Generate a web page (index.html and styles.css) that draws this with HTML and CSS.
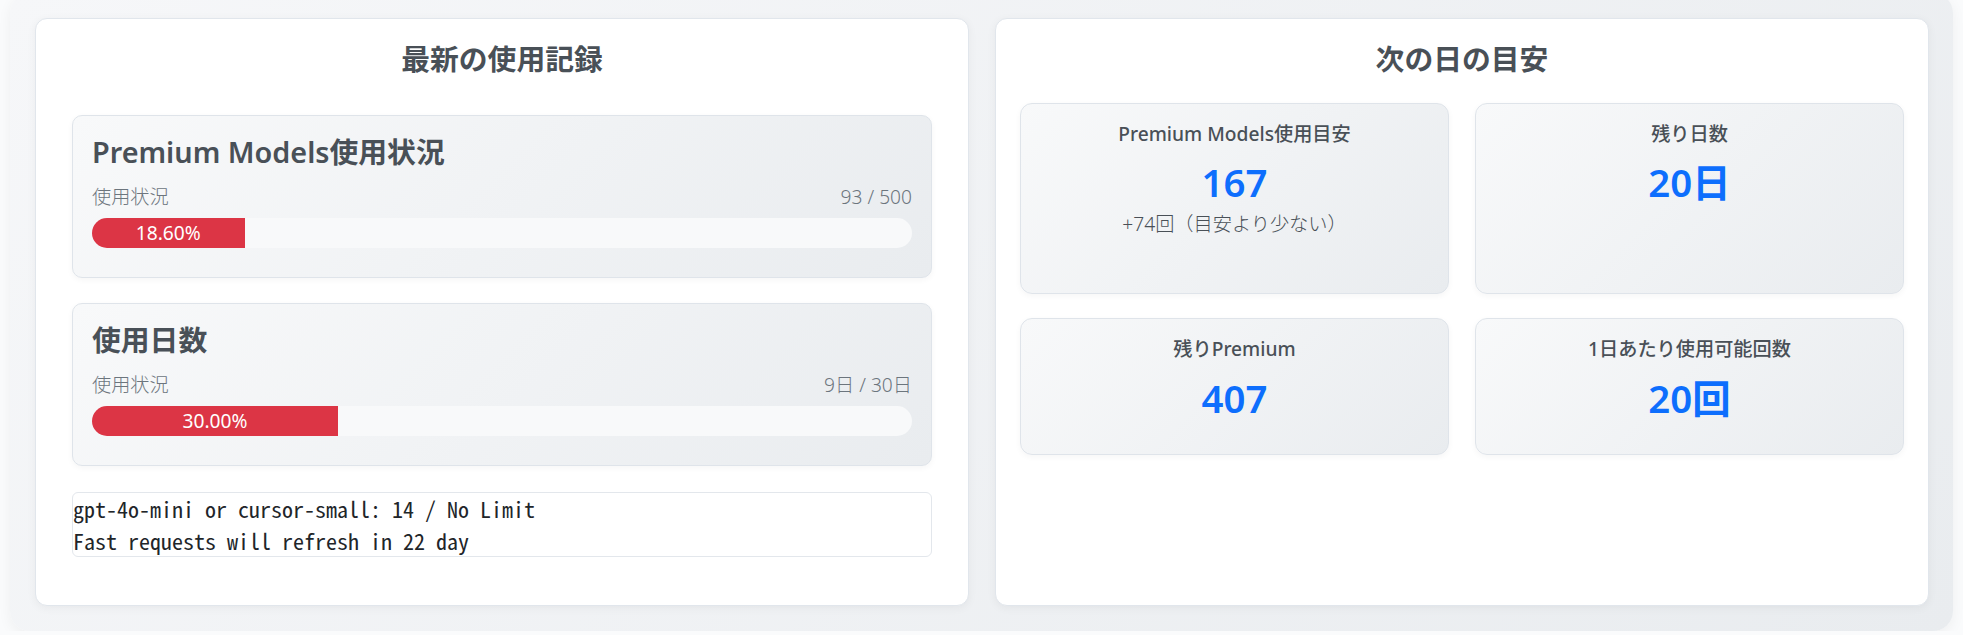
FILE: index.html
```html
<!DOCTYPE html>
<html lang="ja">
<head>
<meta charset="utf-8">
<title>Usage</title>
<link rel="stylesheet" href="styles.css">
</head>
<body>
<div class="page">
  <section class="card card-left">
    <h3 class="card-title">最新の使用記録</h3>
    <div class="box">
      <h4 class="box-title">Premium Models使用状況</h4>
      <div class="info-row"><span>使用状況</span><span>93 / 500</span></div>
      <div class="bar"><div class="bar-fill" style="width:18.6%">18.60%</div></div>
    </div>
    <div class="box">
      <h4 class="box-title">使用日数</h4>
      <div class="info-row"><span>使用状況</span><span>9日 / 30日</span></div>
      <div class="bar"><div class="bar-fill" style="width:30%">30.00%</div></div>
    </div>
    <pre class="raw">gpt-4o-mini or cursor-small: 14 / No Limit
Fast requests will refresh in 22 day</pre>
  </section>
  <section class="card card-right">
    <h3 class="card-title">次の日の目安</h3>
    <div class="tiles">
      <div class="tile">
        <div class="tile-label">Premium Models使用目安</div>
        <div class="tile-value">167</div>
        <div class="tile-sub">+74回（目安より少ない）</div>
      </div>
      <div class="tile">
        <div class="tile-label">残り日数</div>
        <div class="tile-value">20日</div>
      </div>
      <div class="tile">
        <div class="tile-label">残りPremium</div>
        <div class="tile-value">407</div>
      </div>
      <div class="tile">
        <div class="tile-label">1日あたり使用可能回数</div>
        <div class="tile-value">20回</div>
      </div>
    </div>
  </section>
</div>
</body>
</html>
```
FILE: styles.css
```css
* { box-sizing: border-box; }
html, body { margin: 0; padding: 0; }
body {
  background: #fafbfc;
  font-family: "Noto Sans", "Noto Sans CJK JP", sans-serif;
  color: #495057;
  overflow: hidden;
}
.page {
  margin: -7px 10px 0 10px;
  padding: 25px 24px 25px 25px;
  border-radius: 20px;
  background: linear-gradient(135deg, #f6f7f9 0%, #e9ecef 100%);
  box-shadow: 0 4px 14px rgba(0, 0, 0, 0.05);
  display: grid;
  grid-template-columns: 1fr 1fr;
  column-gap: 26px;
}
.card {
  background: #fff;
  border: 1px solid #e1e6ec;
  border-radius: 12px;
  box-shadow: 0 2px 10px rgba(0, 0, 0, 0.05);
}
.card-left { padding: 23px 36px 48px 36px; }
.card-right { padding: 23px 24px 24px 24px; }
.card-title {
  margin: 0 0 38px 0;
  font-size: 28.8px;
  line-height: 1.2;
  font-weight: 600;
  text-align: center;
  color: #495057;
}
.card-right .card-title { margin-bottom: 26px; }
.box {
  background: linear-gradient(135deg, #f8f9fa 0%, #e9ecef 100%);
  border: 1px solid #dfe4ea;
  border-radius: 10px;
  padding: 19px 19px 29px 19px;
  margin-bottom: 25px;
  box-shadow: 0 2px 6px rgba(0, 0, 0, 0.04);
}
.box-title {
  margin: 0 0 14px 0;
  font-size: 28.8px;
  line-height: 1.2;
  font-weight: 600;
  color: #495057;
}
.info-row {
  display: flex;
  justify-content: space-between;
  font-size: 19.2px;
  line-height: 1.5;
  color: #6c757d;
  font-weight: 300;
  margin-bottom: 6px;
}
.bar {
  height: 30px;
  border-radius: 15px;
  background: #f8f9fa;
  overflow: hidden;
  display: flex;
}
.bar-fill {
  background: #dc3545;
  color: #fff;
  font-size: 19.2px;
  line-height: 30px;
  text-align: center;
  white-space: nowrap;
}
.raw {
  margin: 26px 0 0 0;
  border: 1px solid #e3e7ec;
  border-radius: 6px;
  background: #fff;
  font-family: "Noto Sans Mono CJK JP", "Liberation Mono", monospace;
  font-size: 22px;
  line-height: 31.5px;
  color: #212529;
  padding: 0;
}
.tiles {
  display: grid;
  grid-template-columns: 1fr 1fr;
  column-gap: 26px;
  row-gap: 24px;
}
.tile {
  background: linear-gradient(135deg, #f8f9fa 0%, #e9ecef 100%);
  border: 1px solid #dfe4ea;
  border-radius: 12px;
  padding: 16px 16px 33px 16px;
  text-align: center;
  box-shadow: 0 2px 6px rgba(0, 0, 0, 0.04);
}
.tile-label {
  font-size: 19.2px;
  line-height: 1.5;
  font-weight: 500;
  color: #495057;
}
.tile-value {
  margin-top: 11px;
  font-size: 38.4px;
  line-height: 1.2;
  font-weight: 600;
  color: #0d6efd;
}
.tile-sub {
  margin: 5px 0 21px 0;
  font-size: 19.2px;
  line-height: 1.5;
  font-weight: 300;
  color: #495057;
}
```
